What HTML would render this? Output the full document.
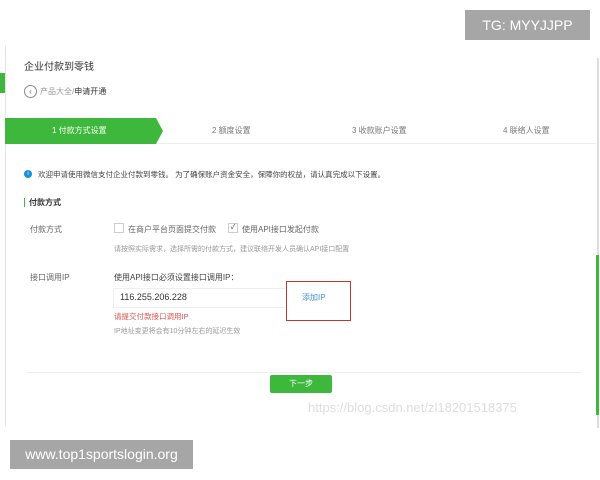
<!DOCTYPE html>
<html><head><meta charset="utf-8"><style>
body{margin:0;width:600px;height:480px;background:#fff;position:relative;overflow:hidden;font-family:"Liberation Sans","Noto Sans CJK SC",sans-serif;color:#333}
.a{position:absolute;white-space:nowrap}
.s{font-size:8px;color:#666}
</style></head><body>
<div class="a" style="left:465px;top:10px;width:125px;height:30px;background:#a6a6a6;color:#fff;font-size:14px;line-height:30px;text-align:center">TG: MYYJJPP</div>
<div class="a" style="left:5px;top:46px;width:1px;height:380px;background:#e4e4e4"></div>
<div class="a" style="left:0;top:73px;width:5px;height:20px;background:#3db83d"></div>
<div class="a" style="left:597px;top:58px;width:2px;height:370px;background:#ddd"></div>
<div class="a" style="left:596px;top:255px;width:3px;height:160px;background:#3db83d"></div>
<div class="a" style="left:24px;top:58px;font-size:10px;color:#333">企业付款到零钱</div>
<div class="a" style="left:24px;top:85px;width:11px;height:11px;border:1px solid #888;border-radius:50%;font-size:8px;line-height:11px;text-align:center;color:#666">‹</div>
<div class="a" style="left:40px;top:86px;font-size:8px;color:#999">产品大全/<span style="color:#333">申请开通</span></div>
<div class="a" style="left:6px;top:118px;width:590px;height:25px;border-bottom:1px solid #eee"></div>
<svg class="a" style="left:5px;top:118px" width="160" height="26"><polygon points="0,0 151,0 158,13 151,26 0,26" fill="#3db83d"/></svg>
<div class="a" style="left:52px;top:125px;font-size:8px;color:#fff">1 付款方式设置</div>
<div class="a" style="left:212px;top:125px;font-size:8px;color:#777">2 额度设置</div>
<div class="a" style="left:352px;top:125px;font-size:8px;color:#777">3 收款账户设置</div>
<div class="a" style="left:503px;top:125px;font-size:8px;color:#777">4 联络人设置</div>
<div class="a" style="left:24px;top:170px;width:8px;height:8px;border-radius:50%;background:#1a8ee0;color:#fff;font-size:6px;line-height:8px;text-align:center">i</div>
<div class="a" style="left:38px;top:169px;font-size:7.5px;color:#444">欢迎申请使用微信支付企业付款到零钱。 为了确保账户资金安全，保障你的权益，请认真完成以下设置。</div>
<div class="a" style="left:24px;top:198px;width:1px;height:9px;background:#3db83d"></div>
<div class="a" style="left:29px;top:197px;font-size:8px;font-weight:bold;color:#333">付款方式</div>
<div class="a s" style="left:30px;top:224px">付款方式</div>
<div class="a" style="left:114px;top:223px;width:8px;height:8px;border:1px solid #ccc"></div>
<div class="a s" style="left:128px;top:224px">在商户平台页面提交付款</div>
<div class="a" style="left:228px;top:223px;width:8px;height:8px;border:1px solid #ccc;font-size:7px;line-height:8px;text-align:center">✓</div>
<div class="a s" style="left:242px;top:224px">使用API接口发起付款</div>
<div class="a" style="left:114px;top:244px;font-size:7px;color:#999">请按照实际需求，选择所需的付款方式，建议联络开发人员确认API接口配置</div>
<div class="a s" style="left:30px;top:272px">接口调用IP</div>
<div class="a s" style="left:114px;top:272px;color:#444">使用API接口必须设置接口调用IP：</div>
<div class="a" style="left:113px;top:288px;width:172px;height:18px;border:1px solid #eee"></div>
<div class="a" style="left:120px;top:292px;font-size:9px;color:#333">116.255.206.228</div>
<div class="a" style="left:286px;top:281px;width:63px;height:38px;border:1px solid #c0392b"></div>
<div class="a" style="left:302px;top:292px;font-size:8px;color:#4a8fd6">添加IP</div>
<div class="a" style="left:114px;top:311px;font-size:7.5px;color:#d9534f">请提交付款接口调用IP</div>
<div class="a" style="left:114px;top:326px;font-size:7px;color:#999">IP地址变更将会有10分钟左右的延迟生效</div>
<div class="a" style="left:26px;top:372px;width:556px;height:1px;background:#eee"></div>
<div class="a" style="left:270px;top:375px;width:62px;height:18px;background:#3db83d;border-radius:2px;color:#fff;font-size:8px;line-height:18px;text-align:center">下一步</div>
<div class="a" style="left:308px;top:400px;font-size:13px;color:#ddd">https://blog.csdn.net/zl18201518375</div>
<div class="a" style="left:10px;top:440px;width:183px;height:29px;background:#a6a6a6;color:#fff;font-size:14px;line-height:29px;text-align:center">www.top1sportslogin.org</div>
</body></html>
